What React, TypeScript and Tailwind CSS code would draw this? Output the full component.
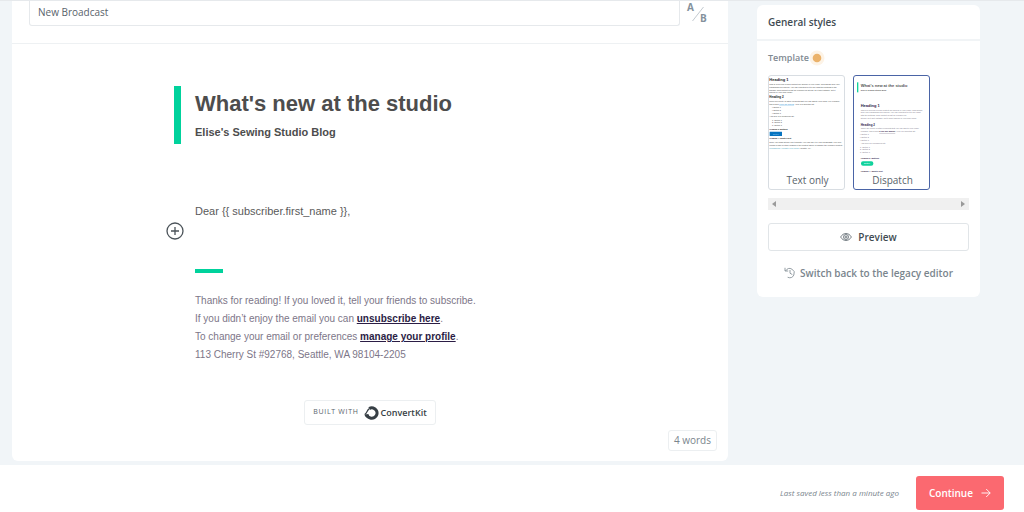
import type { ReactNode } from 'react'
import { useState } from 'react'

function HelpDot() {
    return (
        <svg width="16" height="16" viewBox="0 0 16 16" aria-hidden="true">
            <circle cx="8" cy="8" r="7.5" fill="#fdf3e6" />
            <circle cx="8" cy="8" r="4.3" fill="#ebb26a" />
        </svg>
    )
}

function AbIcon() {
    return (
        <svg width="24" height="24" viewBox="0 0 24 24" fontFamily="Open Sans, sans-serif" fontSize="10" fontWeight="700" fill="#84919c">
            <text x="1" y="10">A</text>
            <text x="14" y="21">B</text>
            <path d="M6.5 20 17.5 6" stroke="#c3cad0" strokeWidth="1" />
        </svg>
    )
}

function EyeIcon() {
    return (
        <svg width="12" height="12" viewBox="0 0 12 12" fill="none" stroke="#59636b" strokeWidth="0.8">
            <path d="M.6 6C2 3.6 3.9 2.5 6 2.5S10 3.6 11.4 6C10 8.4 8.1 9.5 6 9.5S2 8.4.6 6Z" />
            <circle cx="6" cy="6" r="2.5" />
            <circle cx="6" cy="6" r="1" />
        </svg>
    )
}

function HistoryIcon() {
    return (
        <svg width="12" height="12" viewBox="0 0 12 12" fill="none" stroke="#7a858d" strokeWidth="0.8" strokeLinecap="round" strokeLinejoin="round">
            <path d="M1.8 3.6A4.6 4.6 0 1 1 4 10.4" />
            <path d="M1 1.2v2.8h2.8" />
            <path d="M6 3.4v2.8l2 1.2" />
        </svg>
    )
}

function PlusCircle() {
    return (
        <svg width="18" height="18" viewBox="0 0 18 18" fill="none" stroke="#4b5359" strokeWidth="1.3">
            <circle cx="9" cy="9" r="8" />
            <path d="M9 5v8M5 9h8" />
        </svg>
    )
}

function ArrowIcon() {
    return (
        <svg width="10" height="10" viewBox="0 0 10 10" fill="none" stroke="#ffffff" strokeWidth="0.9">
            <path d="M.5 5h8.7M5.2 1l4 4-4 4" />
        </svg>
    )
}

function ConvertKitMark() {
    return (
        <svg width="15" height="14" viewBox="0 0 15 14" aria-hidden="true" fill="none">
            <path d="M5.2 2.6A5.2 5.2 0 1 1 3.2 9.4" stroke="#373f45" strokeWidth="3" />
            <path d="M.8 8.4C2.8 7.8 2.8 4.8 5 2.8" stroke="#373f45" strokeWidth="1.2" />
            <path d="M.4 8.6 4.4 8 6 13C3 12.800 1 11 .4 8.600Z" fill="#373f45" />
        </svg>
    )
}

function TextOnlyThumb() {
    return (
        <svg className="w-full" viewBox="0 0 225 336" fontFamily="Liberation Sans, Arial, sans-serif" fontSize="6" fill="#444444" aria-hidden="true">
            <g fontWeight="700" fill="#222222">
                <text x="1" y="15" fontSize="12">Heading 1</text>
                <text x="1" y="66" fontSize="9">Heading 2</text>
                <text x="1" y="161">Heading 3: Buttons</text>
                <text x="1" y="190">Heading 4: What's next</text>
            </g>
            <text x="1" y="28">This is a preview of how content will appear in your email. This shows how your</text>
            <text x="1" y="36">paragraphs will appear. You can read this text to see what the settings in the</text>
            <text x="1" y="44">sidebar. This content is just an example for styling, so it isn't editable, but it</text>
            <text x="1" y="52">appear in your final email!</text>
            <text x="1" y="78">There are plenty of other elements that you can add to your email. For example,</text>
            <text x="1" y="86">this is how <tspan fill="#1f8dd6" textDecoration="underline">a link will appear</tspan>. Here is a bulleted list:</text>
            <text x="9" y="97">•  Option 1</text>
            <text x="9" y="105">•  Option 2</text>
            <text x="9" y="113">•  Option 3</text>
            <text x="1" y="123">And here is a numbered list:</text>
            <text x="9" y="134">1.  Option 1</text>
            <text x="9" y="142">2.  Option 2</text>
            <text x="9" y="150">3.  Option 3</text>
            <rect x="2" y="167" width="37" height="13" rx="1" fill="#0875c1" />
            <text x="12" y="176" fill="#8cc4ec">Button</text>
            <text x="1" y="201">Once you finish styling your template, you can use it in your broadcasts. Feel free</text>
            <text x="1" y="209">upload a logo or other images in the content above or disable the example content.</text>
            <text x="1" y="218"><tspan fill="#4aa3c0">Unsubscribe | Update your profile</tspan> | Seattle, WA</text>
        </svg>
    )
}

function DispatchThumb() {
    return (
        <svg className="w-full" viewBox="0 0 225 336" fontFamily="Liberation Sans, Arial, sans-serif" fontSize="6" fill="#7d7688" aria-hidden="true">
            <rect x="9" y="19" width="4" height="30" fill="#10d29c" />
            <g fontWeight="700" fill="#555555">
                <text x="20" y="32" fontSize="12">What's new at the studio</text>
                <text x="20" y="44">Elise's Sewing Studio Blog</text>
            </g>
            <g fontWeight="700" fill="#30244a">
                <text x="20" y="93" fontSize="12">Heading 1</text>
                <text x="20" y="149" fontSize="9">Heading 2</text>
                <text x="20" y="250">Heading 3: Buttons</text>
                <text x="20" y="287">Heading 4: What's next</text>
            </g>
            <text x="20" y="104">This is a preview of how content will appear in your email. This shows</text>
            <text x="20" y="112">how your paragraphs will appear. You can read this text to see what</text>
            <text x="20" y="120">with the settings. This content is just an example for</text>
            <text x="20" y="128">styling, so it isn't editable, but it won't appear in your final email.</text>
            <text x="20" y="160">There are plenty of other elements that you can add to your email.</text>
            <text x="20" y="168">example, this is how <tspan fill="#30244a" fontWeight="700" textDecoration="underline">a link will appear</tspan>. Here is a bulleted list:</text>
            <text x="18" y="178">•  Option 1</text>
            <text x="18" y="186">•  Option 2</text>
            <text x="18" y="194">•  Option 3</text>
            <text x="20" y="205">And here is a numbered list:</text>
            <text x="18" y="215">1.  Option 1</text>
            <text x="18" y="223">2.  Option 2</text>
            <text x="18" y="231">3.  Option 3</text>
            <rect x="21" y="256" width="37" height="13" rx="6" fill="#10d29c" />
            <text x="30" y="265" fill="#ffffff">Button</text>
        </svg>
    )
}

interface TemplateOptionProps {
    name: string
    checked: boolean
    onSelect: (name: string) => void
    children: ReactNode
}

function TemplateOption({ name, checked, onSelect, children }: TemplateOptionProps) {
    return (
        <label className={`relative w-[77px] h-[115px] shrink-0 rounded-[3px] border bg-white overflow-hidden cursor-pointer ${checked ? 'border-[#4a64a6]' : 'border-[#d8dde2]'}`}>
            <input
                type="radio"
                name="template"
                value={name}
                checked={checked}
                onChange={() => onSelect(name)}
                className="sr-only"
            />
            {children}
            <span className="absolute inset-x-0 bottom-px pl-[2px] text-center text-[10px] leading-4 text-[#59636b]">{name}</span>
        </label>
    )
}

function StylesPanel() {
    const [template, setTemplate] = useState('Dispatch')

    return (
        <aside className="w-[223px] shrink-0 mt-1 rounded-md bg-white">
            <h2 className="px-[11px] h-9 flex items-center border-b-2 border-[#f1f4f6] text-[10px] font-semibold text-[#414b52]">
                General styles
            </h2>
            <div className="px-[11px] pt-[9px] pb-4">
                <fieldset>
                    <legend className="flex items-center h-4 text-[9px] font-semibold text-[#7f8a92]">
                        Template
                        <HelpDot />
                    </legend>
                    <div className="mt-[9px] flex gap-2">
                        <TemplateOption name="Text only" checked={template === 'Text only'} onSelect={setTemplate}>
                            <TextOnlyThumb />
                        </TemplateOption>
                        <TemplateOption name="Dispatch" checked={template === 'Dispatch'} onSelect={setTemplate}>
                            <DispatchThumb />
                        </TemplateOption>
                    </div>
                </fieldset>
                <div className="mt-2 h-3 px-1 flex items-center justify-between bg-[#f0f0f0]">
                    <svg width="4" height="6" viewBox="0 0 4 6" fill="#9a9a9a"><path d="M4 0v6L0 3Z" /></svg>
                    <svg width="4" height="6" viewBox="0 0 4 6" fill="#9a9a9a"><path d="M0 0v6l4-3Z" /></svg>
                </div>
                <button type="button" className="mt-[13px] w-full h-7 flex items-center justify-center gap-[6px] rounded-[3px] border border-[#e1e5e8] text-[10px] font-semibold text-[#414b52]">
                    <EyeIcon />
                    Preview
                </button>
                <button type="button" className="mt-[14px] w-full h-4 flex items-center justify-center gap-1 text-[10px] font-semibold text-[#7a858d]">
                    <HistoryIcon />
                    Switch back to the legacy editor
                </button>
            </div>
        </aside>
    )
}

function EmailBody() {
    return (
        <article className="mx-auto w-[392px] pt-[42px] font-['Liberation_Sans',Arial,sans-serif] text-[11px] text-[#5a5a5a]">
            <header className="h-[58px] border-l-[7px] border-[#00d29c] pl-[14px] pt-1 text-[#4d4d4d]">
                <h1 className="text-[22px] leading-7 font-bold">What's new at the studio</h1>
                <p className="pt-1 leading-5 font-bold">Elise's Sewing Studio Blog</p>
            </header>
            <p className="mt-[57px] pl-[21px] leading-5">{'Dear {{ subscriber.first_name }},'}</p>
            <button type="button" aria-label="Add content" className="-ml-2 block h-5">
                <PlusCircle />
            </button>
            <div className="mt-7 ml-[21px] w-7 h-1 bg-[#00d29c]" />
            <footer className="mt-[19px] pl-[21px] text-[10px] leading-[18px] text-[#7d7688]">
                <p>Thanks for reading! If you loved it, tell your friends to subscribe.</p>
                <p>If you didn’t enjoy the email you can <a href="#unsubscribe" className="font-bold underline text-[#2b1d45]">unsubscribe here</a>.</p>
                <p>To change your email or preferences <a href="#profile" className="font-bold underline text-[#2b1d45]">manage your profile</a>.</p>
                <p>113 Cherry St #92768, Seattle, WA 98104-2205</p>
            </footer>
            <a href="#convertkit" className="mx-auto mt-9 w-[132px] h-[25px] flex items-center justify-center rounded-[3px] border border-[#eceff1] font-['Open_Sans',sans-serif]">
                <span className="text-[7px] tracking-widest text-[#59636b]">BUILT WITH</span>
                <span className="ml-[5px]"><ConvertKitMark /></span>
                <span className="ml-[2px] text-[9px] font-semibold text-[#373f45]">ConvertKit</span>
            </a>
        </article>
    )
}

export default function App() {
    const [subject, setSubject] = useState('New Broadcast')

    return (
        <div className="min-h-screen flex flex-col border-t border-[#e6e9ec] bg-[#f1f5f8] font-['Open_Sans','Noto_Sans',sans-serif]">
            <main className="flex-1 flex items-start gap-[29px] pl-3 pr-11 pb-[3px]">
                <section className="flex-1 rounded-b-md bg-white">
                    <div className="h-[43px] pl-[17px] pr-[18px] flex gap-[6px] border-b border-[#eef1f3]">
                        <input
                            type="text"
                            aria-label="Subject"
                            value={subject}
                            onChange={(e) => setSubject(e.target.value)}
                            className="flex-1 min-w-0 h-[25px] px-2 pb-[3px] rounded-b-[3px] border border-t-0 border-[#e6e9ec] text-[10px] text-[#59636b] outline-none"
                        />
                        <button type="button" aria-label="A/B test subject" className="h-6 w-6">
                            <AbIcon />
                        </button>
                    </div>
                    <EmailBody />
                    <div className="mt-[5px] flex justify-end pr-[11px] pb-[10px]">
                        <span className="h-[21px] px-[5px] flex items-center rounded-[3px] border border-[#eceff1] text-[10px] text-[#7a858d]">
                            4 words
                        </span>
                    </div>
                </section>
                <StylesPanel />
            </main>
            <footer className="h-[47px] pt-[11px] pr-5 flex items-start justify-end gap-[17px] bg-white">
                <p className="leading-[34px] text-[8px] italic text-[#7a858d]">Last saved less than a minute ago</p>
                <button type="button" className="h-[34px] px-[13px] flex items-center gap-2 rounded-[3px] bg-[#fb6970] text-[10px] font-semibold text-white">
                    Continue
                    <ArrowIcon />
                </button>
            </footer>
        </div>
    )
}
